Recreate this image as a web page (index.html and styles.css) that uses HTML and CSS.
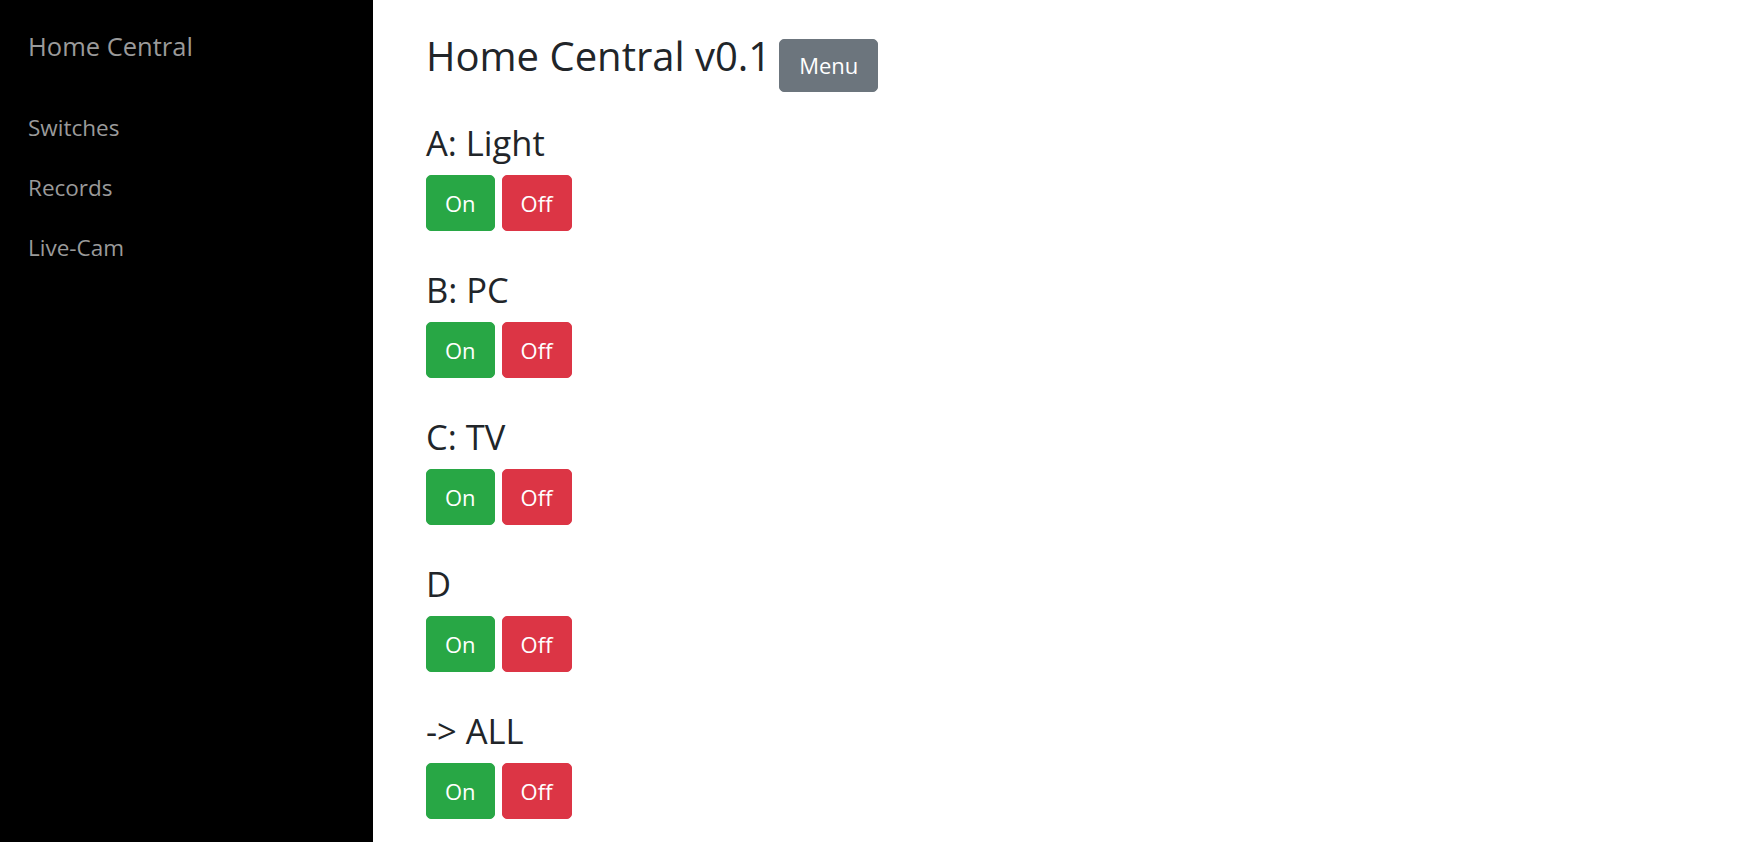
FILE: index.html
```html
<!DOCTYPE html>
<html lang="en">
<head>
<meta charset="utf-8">
<title>Home Central</title>
<link rel="stylesheet" href="styles.css">
</head>
<body>
<div class="layout">
  <nav class="sidebar">
    <div class="brand">Home Central</div>
    <a class="nav-link" href="#">Switches</a>
    <a class="nav-link" href="#">Records</a>
    <a class="nav-link" href="#">Live-Cam</a>
  </nav>
  <main class="content">
    <div class="header">
      <h1 class="title">Home Central v0.1</h1>
      <button class="btn btn-menu">Menu</button>
    </div>
    <section class="switch">
      <h3 class="switch-name">A: Light</h3>
      <div class="btn-row"><button class="btn btn-on">On</button><button class="btn btn-off">Off</button></div>
    </section>
    <section class="switch">
      <h3 class="switch-name">B: PC</h3>
      <div class="btn-row"><button class="btn btn-on">On</button><button class="btn btn-off">Off</button></div>
    </section>
    <section class="switch">
      <h3 class="switch-name">C: TV</h3>
      <div class="btn-row"><button class="btn btn-on">On</button><button class="btn btn-off">Off</button></div>
    </section>
    <section class="switch">
      <h3 class="switch-name">D</h3>
      <div class="btn-row"><button class="btn btn-on">On</button><button class="btn btn-off">Off</button></div>
    </section>
    <section class="switch">
      <h3 class="switch-name">-&gt; ALL</h3>
      <div class="btn-row"><button class="btn btn-on">On</button><button class="btn btn-off">Off</button></div>
    </section>
  </main>
</div>
</body>
</html>
```
FILE: styles.css
```css
* { box-sizing: border-box; }
html, body {
  margin: 0;
  padding: 0;
  height: 100%;
  background: #fff;
  font-family: "Open Sans", "Noto Sans", sans-serif;
  color: #212529;
  overflow: hidden;
}
.layout {
  display: flex;
  height: 842px;
}
.sidebar {
  width: 373px;
  flex: 0 0 373px;
  background: #000;
  padding: 31px 0 0 28px;
  display: flex;
  flex-direction: column;
}
.brand {
  font-size: 25.5px;
  line-height: 30px;
  color: #9a9a9a;
  margin-bottom: 37px;
}
.nav-link {
  display: block;
  font-size: 22.5px;
  line-height: 30px;
  padding: 15px 0;
  color: #9a9a9a;
  text-decoration: none;
}
.content {
  flex: 1;
  padding: 32px 0 0 53px;
}
.header {
  display: flex;
  align-items: flex-start;
  margin-bottom: 31px;
}
.title {
  margin: 0;
  font-size: 40px;
  line-height: 48px;
  font-weight: 400;
}
.btn {
  font-family: inherit;
  color: #fff;
  border: 1px solid transparent;
  border-radius: 5px;
  cursor: pointer;
}
.btn-menu {
  margin: 7px 0 0 8px;
  font-size: 22px;
  line-height: 33px;
  padding: 9px 19px;
  background: #6c757d;
  border-color: #6c757d;
}
.switch {
  margin-bottom: 39px;
}
.switch-name {
  margin: 0 0 12px;
  font-size: 34.5px;
  line-height: 40px;
  font-weight: 400;
}
.btn-row {
  display: flex;
  gap: 7px;
}
.btn-on, .btn-off {
  font-size: 22px;
  line-height: 34px;
  padding: 10px 18px;
}
.btn-on {
  background: #28a745;
  border-color: #28a745;
}
.btn-off {
  background: #dc3545;
  border-color: #dc3545;
}
```
